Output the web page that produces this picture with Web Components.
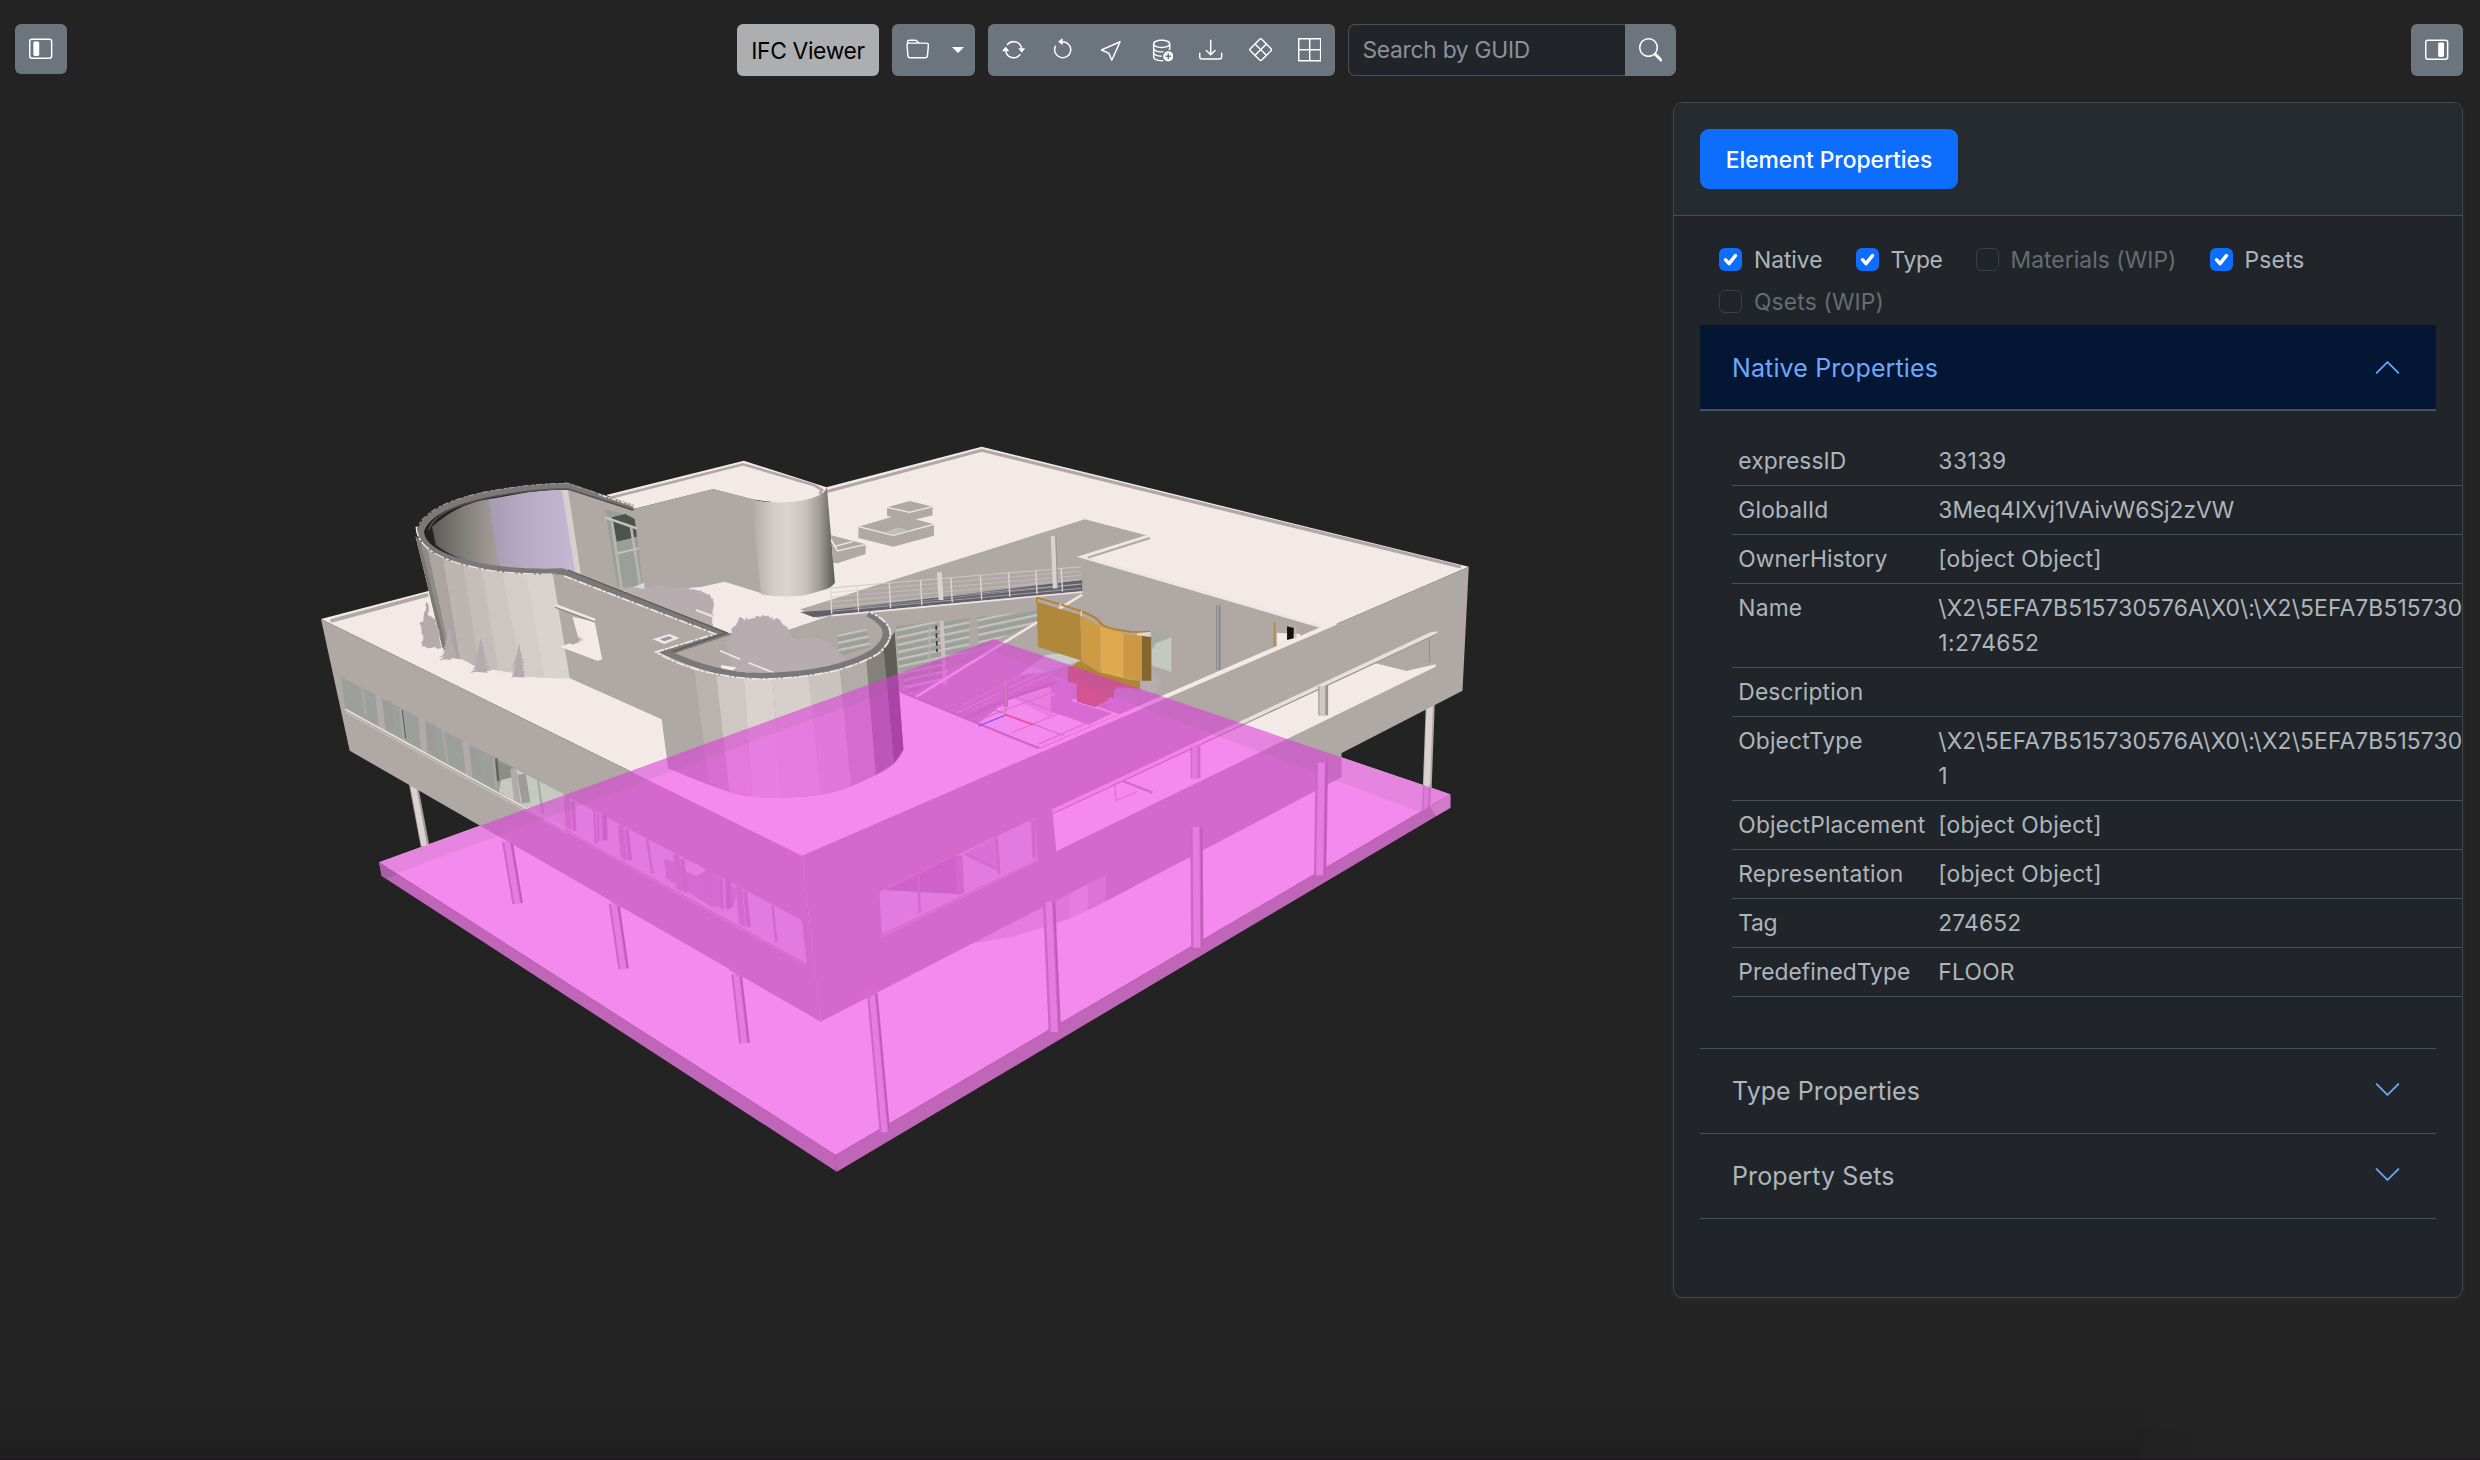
<!DOCTYPE html>
<html lang="en">
<head>
<meta charset="utf-8">
<title>IFC Viewer</title>
<style>
html,body{margin:0;height:100%}
body{background:#232323;overflow:hidden;font-family:Inter,"Liberation Sans",sans-serif;font-size:22.8px;color:#adb5bd}
</style>
</head>
<body>
<viewer-app></viewer-app>
<script>
const define=(name,html,init)=>{
  const t=document.createElement('template');t.innerHTML=html;
  customElements.define(name,class extends HTMLElement{
    constructor(){super();this.attachShadow({mode:'open'}).append(t.content.cloneNode(true));}
    connectedCallback(){if(init)init.call(this,this.shadowRoot);}
  });
};
const ICONS={
 sidebarLeft:'<path d="M14 2a1 1 0 0 1 1 1v10a1 1 0 0 1-1 1H2a1 1 0 0 1-1-1V3a1 1 0 0 1 1-1h12zM2 1a2 2 0 0 0-2 2v10a2 2 0 0 0 2 2h12a2 2 0 0 0 2-2V3a2 2 0 0 0-2-2H2z"/><path d="M3 4a1 1 0 0 1 1-1h2a1 1 0 0 1 1 1v8a1 1 0 0 1-1 1H4a1 1 0 0 1-1-1V4z"/>',
 sidebarRight:'<path d="M14 2a1 1 0 0 1 1 1v10a1 1 0 0 1-1 1H2a1 1 0 0 1-1-1V3a1 1 0 0 1 1-1h12zM2 1a2 2 0 0 0-2 2v10a2 2 0 0 0 2 2h12a2 2 0 0 0 2-2V3a2 2 0 0 0-2-2H2z"/><path d="M9 4a1 1 0 0 1 1-1h2a1 1 0 0 1 1 1v8a1 1 0 0 1-1 1h-2a1 1 0 0 1-1-1V4z"/>',
 folder:'<path d="M.54 3.87.5 3a2 2 0 0 1 2-2h3.672a2 2 0 0 1 1.414.586l.828.828A2 2 0 0 0 9.828 3h3.982a2 2 0 0 1 1.992 2.181l-.637 7A2 2 0 0 1 13.174 14H2.826a2 2 0 0 1-1.991-1.819l-.637-7a1.99 1.99 0 0 1 .342-1.31zM2.19 4a1 1 0 0 0-.996 1.09l.637 7a1 1 0 0 0 .995.91h10.348a1 1 0 0 0 .995-.91l.637-7A1 1 0 0 0 13.81 4H2.19zm4.69-1.707A1 1 0 0 0 6.172 2H2.5a1 1 0 0 0-1 .981l.006.139C1.72 3.042 1.95 3 2.19 3h5.396l-.707-.707z"/>',
 repeat:'<path d="M11.534 7h3.932a.25.25 0 0 1 .192.41l-1.966 2.36a.25.25 0 0 1-.384 0l-1.966-2.36a.25.25 0 0 1 .192-.41zm-11 2h3.932a.25.25 0 0 0 .192-.41L2.692 6.23a.25.25 0 0 0-.384 0L.342 8.59A.25.25 0 0 0 .534 9z"/><path d="M8 3c-1.552 0-2.94.707-3.857 1.818a.5.5 0 1 1-.771-.636A6.002 6.002 0 0 1 13.917 7H12.9A5.002 5.002 0 0 0 8 3zM3.1 9a5.002 5.002 0 0 0 8.757 2.182.5.5 0 1 1 .771.636A6.002 6.002 0 0 1 2.083 9H3.1z"/>',
 ccw:'<path d="M8 3a5 5 0 1 1-4.546 2.914.5.5 0 0 0-.908-.417A6 6 0 1 0 8 2v1z"/><path d="M8 4.466V.534a.25.25 0 0 0-.41-.192L5.23 2.308a.25.25 0 0 0 0 .384l2.36 1.966A.25.25 0 0 0 8 4.466z"/>',
 cursor:'<path d="M14.082 2.182a.5.5 0 0 1 .103.557L8.528 15.467a.5.5 0 0 1-.917-.007L5.57 10.694.803 8.652a.5.5 0 0 1-.006-.916l12.728-5.657a.5.5 0 0 1 .556.103zM2.25 8.184l3.897 1.67a.5.5 0 0 1 .262.263l1.67 3.897L12.743 3.52z"/>',
 dbadd:'<path d="M12.5 16a3.5 3.5 0 1 0 0-7 3.5 3.5 0 0 0 0 7Zm.5-5v1h1a.5.5 0 0 1 0 1h-1v1a.5.5 0 0 1-1 0v-1h-1a.5.5 0 0 1 0-1h1v-1a.5.5 0 0 1 1 0Z"/><path d="M12.096 6.223A4.92 4.92 0 0 0 13 5.698V7c0 .289-.213.654-.753 1.007a4.493 4.493 0 0 1 1.753.25V4c0-1.007-.875-1.755-1.904-2.223C11.022 1.289 9.573 1 8 1s-3.022.289-4.096.777C2.875 2.245 2 2.993 2 4v9c0 1.007.875 1.755 1.904 2.223C4.978 15.71 6.427 16 8 16c.536 0 1.058-.034 1.555-.097a4.525 4.525 0 0 1-.813-.927C8.5 14.992 8.252 15 8 15c-1.464 0-2.766-.27-3.682-.687C3.356 13.875 3 13.373 3 13v-1.302c.271.202.58.378.904.525C4.978 12.71 6.427 13 8 13h.027a4.552 4.552 0 0 1 0-1H8c-1.464 0-2.766-.27-3.682-.687C3.356 10.875 3 10.373 3 10V8.698c.271.202.58.378.904.525C4.978 9.71 6.427 10 8 10c.262 0 .52-.008.774-.024a4.525 4.525 0 0 1 1.102-1.132C9.298 8.944 8.666 9 8 9c-1.464 0-2.766-.27-3.682-.687C3.356 7.875 3 7.373 3 7V5.698c.271.202.58.378.904.525C4.978 6.711 6.427 7 8 7s3.022-.289 4.096-.777ZM3 4c0-.374.356-.875 1.318-1.313C5.234 2.271 6.536 2 8 2s2.766.27 3.682.687C12.644 3.125 13 3.627 13 4c0 .374-.356.875-1.318 1.313C10.766 5.729 9.464 6 8 6s-2.766-.27-3.682-.687C3.356 4.875 3 4.373 3 4Z"/>',
 download:'<path d="M.5 9.9a.5.5 0 0 1 .5.5v2.5a1 1 0 0 0 1 1h12a1 1 0 0 0 1-1v-2.5a.5.5 0 0 1 1 0v2.5a2 2 0 0 1-2 2H2a2 2 0 0 1-2-2v-2.5a.5.5 0 0 1 .5-.5z"/><path d="M7.646 11.854a.5.5 0 0 0 .708 0l3-3a.5.5 0 0 0-.708-.708L8.5 10.293V1.5a.5.5 0 0 0-1 0v8.793L5.354 8.146a.5.5 0 1 0-.708.708l3 3z"/>',
 diamond:'<path fill="none" stroke="currentColor" stroke-linejoin="round" d="M7.3.9a1 1 0 0 1 1.4 0l6.4 6.4a1 1 0 0 1 0 1.4l-6.4 6.4a1 1 0 0 1-1.4 0L.9 8.7a1 1 0 0 1 0-1.4zM4.3 4.3l7.4 7.4M11.7 4.3l-7.4 7.4"/>',
 grid:'<path d="M0 0h16v16H0V0zm1 1v6.5h6.5V1H1zm7.5 0v6.5H15V1H8.5zM15 8.5H8.5V15H15V8.5zM7.5 15V8.5H1V15h6.5z"/>',
 search:'<path d="M11.742 10.344a6.5 6.5 0 1 0-1.397 1.398h-.001c.03.04.062.078.098.115l3.85 3.85a1 1 0 0 0 1.415-1.414l-3.85-3.85a1.007 1.007 0 0 0-.115-.1zM12 6.5a5.5 5.5 0 1 1-11 0 5.5 5.5 0 0 1 11 0z"/>',
 chevron:'<path fill-rule="evenodd" d="M1.646 4.646a.5.5 0 0 1 .708 0L8 10.293l5.646-5.647a.5.5 0 0 1 .708.708l-6 6a.5.5 0 0 1-.708 0l-6-6a.5.5 0 0 1 0-.708z"/>',
 check:'<path fill="none" stroke="currentColor" stroke-width="2.4" stroke-linecap="round" stroke-linejoin="round" d="M4.6 8.2l2.4 2.7 4.4-5.6"/>'
};
/* Text run tracked to a fixed advance width */
define('ui-text','<style>:host{display:inline-block;white-space:pre}</style><slot></slot>',function(){
  const s=this.style,a=n=>this.getAttribute(n);
  if(a('size'))s.fontSize=a('size')+'px';
  if(a('weight'))s.fontWeight=a('weight');
  if(a('w')){s.letterSpacing='0px';const n=this.textContent.length;
    s.letterSpacing=((+a('w')-this.getBoundingClientRect().width)/n).toFixed(3)+'px';}
});
define('ui-icon','<style>:host{display:block;width:23.4px;height:23.4px;flex:none}svg{display:block;width:100%;height:100%}</style><svg viewBox="0 0 16 16" fill="currentColor"></svg>',function(r){
  r.querySelector('svg').innerHTML=ICONS[this.getAttribute('name')];
});
define('ui-button','<style>:host{display:flex;align-items:center;justify-content:center;box-sizing:border-box;height:52px;border-radius:6px;background:#6c757d;color:#fff}</style><slot></slot>');
define('search-box',`<style>:host{display:flex;width:328px;height:52px}
.f{flex:1;box-sizing:border-box;border:1px solid #495057;border-right:0;border-radius:7px 0 0 7px;background:#212529;color:#8b9199;display:flex;align-items:center;padding-left:13.5px}
ui-text{margin-top:-2px}
ui-button{width:51px;border-radius:0 7px 7px 0}</style>
<div class="f"><ui-text w="167.5">Search by GUID</ui-text></div><ui-button><ui-icon name="search"></ui-icon></ui-button>`);
define('tool-bar',`<style>:host{display:flex;align-items:flex-start;padding:24px 17px 0 15px;height:78px;position:relative}
.side{width:52px}.mid{display:flex;gap:13px;margin-left:670px}
.title{width:142px;background:#adaeb0;color:#000}
.open{width:83px;justify-content:flex-start;padding-left:14px;gap:23px}
.caret{border:6px solid transparent;border-top:6.5px solid #fff;border-bottom:0}
.tools{width:347px;gap:26px}</style>
<ui-button class="side" style="height:50px"><ui-icon name="sidebarLeft"></ui-icon></ui-button>
<div class="mid">
<ui-button class="title"><ui-text w="113.5">IFC Viewer</ui-text></ui-button>
<ui-button class="open"><ui-icon name="folder"></ui-icon><span class="caret"></span></ui-button>
<ui-button class="tools"><ui-icon name="repeat"></ui-icon><ui-icon name="ccw"></ui-icon><ui-icon name="cursor"></ui-icon><ui-icon name="dbadd"></ui-icon><ui-icon name="download"></ui-icon><ui-icon name="diamond"></ui-icon><ui-icon name="grid"></ui-icon></ui-button>
<search-box></search-box></div>
<ui-button class="side" style="margin-left:auto"><ui-icon name="sidebarRight"></ui-icon></ui-button>`);
define('check-item',`<style>:host{display:flex;align-items:center;gap:12px;height:42px}
.b{width:23px;height:23px;box-sizing:border-box;border-radius:6px;background:#0d6efd;color:#fff}
:host([off]) .b{background:none;border:1px solid #3a4045}:host([off]) ui-icon{display:none}
:host([off]){color:#676c71}ui-icon{width:23px;height:23px}</style><div class="b"><ui-icon name="check"></ui-icon></div><slot></slot>`);
define('prop-row',`<style>:host{display:grid;grid-template-columns:200px 1fr;padding:6px 0 6.85px 6.3px;border-bottom:1px solid #495057;line-height:35.1px;min-height:35.1px}
div{display:flex;flex-direction:column;align-items:flex-start}</style><div><slot name="k"></slot></div><div><slot></slot></div>`);
define('acc-item',`<style>:host{display:block;border-bottom:1px solid #495057}
.h{height:84px;display:flex;align-items:center;justify-content:space-between;padding:0 34.5px 0 32px}
ui-icon{width:29px;height:29px;color:#6ea8fe;margin-top:-2px}
:host([open]) .h{height:83.5px;background:#031633;color:#6ea8fe;border-bottom:2px solid #495057}
:host([open]) .h ::slotted(*),:host([open]) ui-icon{position:relative;top:1px}
:host([open]) ui-icon{transform:rotate(180deg)}
.c{display:none}:host([open]) .c{display:block;height:583.5px;padding:26.2px 0 27px 32px;margin-right:-26.5px}</style>
<div class="h"><slot name="t"></slot><ui-icon name="chevron"></ui-icon></div><div class="c"><slot></slot></div>`);
define('property-panel',`<style>:host{display:block;box-sizing:border-box;width:790px;height:1196px;margin-left:1673px;position:relative;border:1px solid #42474c;border-radius:9px;background:#212529;overflow:hidden;box-shadow:0 3px 9px rgba(255,255,255,.035)}
.top{height:112px;background:#262b2f;border-bottom:1px solid #464b50;display:flex;align-items:center;padding-left:26px}
.top ui-button{width:258px;height:60px;border-radius:9px;background:#0d6efd}
.checks{display:flex;flex-wrap:wrap;column-gap:33px;padding:22.4px 60px 0 45px;height:87px;align-content:flex-start}
.acc{margin:0 25px 0 26px;width:736px}</style>
<div class="top"><ui-button><ui-text w="206.5" weight="500">Element Properties</ui-text></ui-button></div>
<div class="checks"><check-item><ui-text w="68.5">Native</ui-text></check-item><check-item><ui-text w="52">Type</ui-text></check-item><check-item off><ui-text w="166">Materials (WIP)</ui-text></check-item><check-item><ui-text w="60">Psets</ui-text></check-item><check-item off><ui-text w="130">Qsets (WIP)</ui-text></check-item></div>
<div class="acc">
<acc-item open><ui-text slot="t" size="25" w="206">Native Properties</ui-text>
<prop-row><ui-text slot="k" w="108">expressID</ui-text><ui-text w="68.5">33139</ui-text></prop-row>
<prop-row><ui-text slot="k" w="90">GlobalId</ui-text><ui-text w="296">3Meq4IXvj1VAivW6Sj2zVW</ui-text></prop-row>
<prop-row><ui-text slot="k" w="149">OwnerHistory</ui-text><ui-text w="163.5">[object Object]</ui-text></prop-row>
<prop-row><ui-text slot="k" w="64">Name</ui-text><ui-text w="524">\\X2\\5EFA7B515730576A\\X0\\:\\X2\\5EFA7B515730</ui-text><ui-text w="101">1:274652</ui-text></prop-row>
<prop-row><ui-text slot="k" w="125">Description</ui-text></prop-row>
<prop-row><ui-text slot="k" w="124.5">ObjectType</ui-text><ui-text w="524">\\X2\\5EFA7B515730576A\\X0\\:\\X2\\5EFA7B515730</ui-text><ui-text>1</ui-text></prop-row>
<prop-row><ui-text slot="k" w="187">ObjectPlacement</ui-text><ui-text w="163.5">[object Object]</ui-text></prop-row>
<prop-row><ui-text slot="k" w="165">Representation</ui-text><ui-text w="163.5">[object Object]</ui-text></prop-row>
<prop-row><ui-text slot="k" w="39">Tag</ui-text><ui-text w="83">274652</ui-text></prop-row>
<prop-row><ui-text slot="k" w="172">PredefinedType</ui-text><ui-text w="76.5">FLOOR</ui-text></prop-row>
</acc-item>
<acc-item><ui-text slot="t" size="25" w="188">Type Properties</ui-text></acc-item>
<acc-item><ui-text slot="t" size="25" w="162.5">Property Sets</ui-text></acc-item>
</div>`);
const A='transform="translate(300 430) scale(.38265 .33333)"',B='transform="translate(800 430) scale(.446429 .33333)"',C='transform="translate(360 740) scale(.38265 .33333)"',D='transform="translate(800 740) scale(.446429 .33333)"';
const p=(pts,f)=>`<polygon points="${pts}" fill="${f}"/>`;
const l=(pts,c,w)=>`<polyline points="${pts}" fill="none" stroke="${c}" stroke-width="${w}"/>`;
const G='#b0a8a5',W='#f3eae7';
const noise=i=>{const v=Math.sin(i*127.1+3.7)*43758.5453;return v-Math.floor(v);};
/* jagged foliage outline around an ellipse */
const bush=(cx,cy,rx,ry,f)=>{let s='';const n=84;for(let i=0;i<n;i++){const a=i/n*6.2832,d=(i%2?4+11*noise(i+cx):-5*noise(i));s+=(cx+(rx+d)*Math.cos(a)).toFixed(1)+','+(cy+(ry+d)*Math.sin(a)).toFixed(1)+' ';}return p(s,f);};
/* polygon whose edges are broken into leafy steps */
const leafy=(pts,f)=>{let s='';for(let i=0;i<pts.length;i++){const a=pts[i],b=pts[(i+1)%pts.length],n=Math.max(1,Math.round(Math.hypot(b[0]-a[0],b[1]-a[1])/6));for(let k=0;k<n;k++){const t=k/n;s+=(a[0]+(b[0]-a[0])*t+8*noise(i*31+k)-4).toFixed(1)+','+(a[1]+(b[1]-a[1])*t+10*noise(i*17+k+5)-5).toFixed(1)+' ';}}return p(s,f);};
/* ragged conifer: apex x,y, base line b, half width w */
const cone=(x,y,b,w)=>{let s='';const n=11;const e=(i,d)=>{const t=i/n,h=y+(b-y)*t;return `${(x+d*w*t*(.8+.5*noise(i+x+d))).toFixed(1)} ${(h+4).toFixed(1)} ${(x+d*w*t*.55).toFixed(1)} ${h.toFixed(1)} `;};for(let i=0;i<=n;i++)s+=e(i,-1);for(let i=n;i>=0;i--)s+=e(i,1);return p(s,'#b5abae');};
const box=(L,T,R,Bo,h)=>p(`${L} ${T[1]} ${L} ${T[1]+h} ${Bo[0]} ${Bo[1]+h} ${R} ${T[2]+h} ${R} ${T[2]} ${Bo[0]} ${Bo[1]}`,G)+p(`${L} ${T[1]} ${T[0]} ${T[3]} ${R} ${T[2]} ${Bo[0]} ${Bo[1]}`,G)+l(`${L} ${T[1]} ${Bo[0]} ${Bo[1]} ${R} ${T[2]}`,'#efe6e3',4);
let rails='';for(let i=0;i<6;i++)rails+=l(`68 ${474+i*14} 630 ${410+i*13}`,'#cfc8c8',i?1.5:3);
[68,128,200,270,338,404,467,528,585].forEach(x=>{rails+=l(`${x} ${474-(x-68)*.114} ${x+3} ${552-(x-68)*.13}`,'#ddd6d5',3)});
let thick=[[160,752,172,858,0],[205,797,215,898,1],[262,835,272,930,0],[318,864,325,967,1],[373,900,386,998,0],[432,935,442,1040,1],[505,985,513,1075,0],[557,1015,569,1122,1],[622,1052,635,1153,0]].map(m=>(m[4]?l(`${m[0]+22} ${m[1]+18} ${m[2]+22} ${m[3]-4}`,'#9c9c9b',22):'')+l(`${m[0]} ${m[1]} ${m[2]} ${m[3]}`,m[4]?'#b3abab':'#aca6a6',m[4]?16:6)).join('');
let thickC=[[540,170,545,275,1],[612,205,616,310,0],[682,255,690,364,1],[750,295,764,402,0],[826,343,836,460,1],[910,390,921,500,0],[990,440,1000,562,1],[1078,495,1088,607,0]].map(m=>(m[4]?l(`${m[0]+16} ${m[1]+14} ${m[2]+16} ${m[3]-2}`,'#aaa2a6',10):'')+l(`${m[0]} ${m[1]} ${m[2]} ${m[3]}`,'#b0a8a6',m[4]?16:7)).join('');
const post=(x1,y1,x2,y2)=>l(`${x1} ${y1} ${x2} ${y2}`,'#cf66c8',28)+l(`${x1-1} ${y1} ${x2-1} ${y2}`,'#e67ce0',15)+l(`${x1+11} ${y1} ${x2+11} ${y2}`,'#b95ab5',3);
const quad=(a,b,c)=>p(`${a[0]} ${a[1]} ${b[0]} ${b[1]} ${b[2]} ${b[3]} ${a[2]} ${a[3]}`,c);
const strip=(arr,cols)=>cols.map((c,i)=>quad(arr[i],arr[i+1],c)).join('');
const model=`
<defs>
<linearGradient id="cy"><stop offset="0" stop-color="#b0a8a5"/><stop offset=".25" stop-color="#d2cac7"/><stop offset=".42" stop-color="#dcd4d1"/><stop offset=".65" stop-color="#c9c1be"/><stop offset=".82" stop-color="#a09a96"/><stop offset=".93" stop-color="#74726d"/><stop offset="1" stop-color="#5b5a54"/></linearGradient>
<linearGradient id="in"><stop offset="0" stop-color="#5b5b54"/><stop offset=".4" stop-color="#7c7974"/><stop offset="1" stop-color="#a89f9c"/></linearGradient>
<linearGradient id="lv"><stop offset="0" stop-color="#a49bb2"/><stop offset=".4" stop-color="#b6aac5"/><stop offset="1" stop-color="#c5b8d4"/></linearGradient>
<pattern id="lou" width="40" height="22" patternUnits="userSpaceOnUse" patternTransform="skewY(-16)"><rect width="40" height="22" fill="#9da09a"/><rect width="40" height="7" fill="#c6c2bf"/></pattern>
<clipPath id="slab"><path d="M379 862.3 993.8 639 1450.4 794.3V807.7L836.8 1171.7 381.8 876z"/></clipPath>
</defs>
<g ${C}>${l('139 130 170 318','#a39b98',23)}${l('138 130 168 318','#dcd3d1',15)}</g>
<g ${B}>${l('1412 815 1403 1145','#b0a8a5',20)}${l('1411 815 1402 1145','#dcd3d1',14)}</g>
${p('379 862.3 993.8 639 1450.4 794.3 835.6 1155',W)}
<g ${B}>${l('1405 1065 1402 1145','#b0a8a5',18)}${l('1404 1065 1401 1145','#dcd3d1',10)}</g>
<g ${D}>${p('380 612 570 470 685 400 685 484 645 511 605 535 550 560 480 590','#d5cdca')}${p('550 500 605 440 605 535 550 560','#c9c1be')}${p('645 420 685 400 685 484 645 511','#c3bbb8')}${p('685 395 1213 37 1213 112 685 484',G)}</g>
${p('321 619 981.7 446.7 1468.8 566.7 802 855.7',W)}
${p('321 619 802 855.7 820.7 1021.7 349.7 750.7',G)}
${p('802 855.7 1468.8 566.7 1462.5 690.7 820.7 1021.7',G)}
${l('827 491.5 981.7 450.3 1461 567','#b0a8a5',3.2)}
<g ${A}>${l('80 573 335 494','#b0a8a5',11)}
${p('108 740 690 1092 700 1202 118 838','#9ca09a')}${p('560 1015 690 1092 700 1202 575 1120','#c5c9c2')}
${p('500 985 560 1015 565 1065 515 1055','#8b8f87')}${p('525 1050 560 1040 568 1118 520 1085','#c5c9c2')}
${l('266 840 275 925','#5d625b',5)}${l('513 985 518 1052','#5d625b',6)}
${thick}${l('118 838 700 1203','#e4dddb',5)}${l('120 848 700 1212','#cac2c0',3)}</g>
<g ${C}>${p('525 160 1155 540 1167 668 536 268','#cdcac9')}${p('795 355 890 400 905 385 985 450 975 500 920 500 850 450 800 415','#b3abaa')}${p('850 375 880 372 905 390 880 408 852 395','#d6cecb')}${thickC}${l('632 220 634 302','#a59da0',26)}${l('628 220 630 302','#c4bcbb',9)}${l('955 415 957 507','#a59da0',26)}${l('951 415 953 507','#c4bcbb',9)}${l('440 200 1167 668','#d6cecb',5)}${l('440 210 1167 677','#cac2bf',3)}</g>
<g ${A}>
${p('800 195 1160 92 1376 172 1372 190 1330 210 1240 217 1180 208 1080 178 875 236',W)}
${l('806 205 1158 103 1345 166 1364 180 1358 192','#b0a8a5',8)}
${p('690 172 705 176 875 236 1080 177 1185 208 1215 493 1110 455 1050 470 880 490 850 490 730 437',G)}
<path d="M1180 208Q1240 224 1310 212Q1370 200 1377 172L1398 458Q1380 488 1310 497Q1250 503 1205 493z" fill="url(#cy)"/>
${p('797 238 870 258 880 300 895 460 890 470 830 470','#9aa099')}${p('815 262 850 252 875 268 880 320 828 335','#4c544e')}
${l('797 262 880 295','#c9c4c2',7)}${l('815 275 840 475','#b9b5b3',7)}${l('865 290 890 470','#b9b5b3',7)}${l('830 370 885 355','#c9c4c2',5)}
${p('840 485 900 458 900 480','#d6dad3')}
<path d="M345 290Q420 215 500 206L520 412Q410 395 355 345z" fill="url(#in)"/>
${p('493 208 600 186 686 176 722 436 660 425 520 412','url(#lv)')}
${p('684 176 700 178 735 440 720 434','#d9d0cd')}
${leafy([[333,520],[345,600],[370,655],[340,652],[318,650],[322,620],[315,590],[322,555]],'#b5abae')}
<path d="M302 320Q340 375 400 395Q520 425 660 427L705 745Q560 745 470 715Q420 700 375 660z" fill="#d4cbc9"/>
${strip([[302,318,372,650],[335,362,395,680],[375,388,420,695],[428,406,470,712],[475,415,520,728],[528,422,580,738],[590,426,640,744],[660,428,705,745]],['#8f8b86','#aba4a0','#bdb5b2','#c5bdba','#cdc5c2','#d4ccc9','#dad2cf'])}
${p('302 318 314 335 385 668 372 652','#7c7974')}
${leafy([[335,560],[352,570],[362,600],[370,650],[330,650],[325,600]],'#b5abae')}${cone(390,590,688,24)}
${cone(473,620,725,24)}${cone(572,635,740,22)}
${l('318 656 340 664 368 670','#f3eae7',9)}${l('395 688 425 693 455 712','#f3eae7',8)}${l('500 722 555 732','#f3eae7',7)}${l('585 746 635 750','#f3eae7',9)}
${leafy([[850,487],[870,472],[905,474],[930,465],[970,472],[1010,472],[1048,480],[1072,500],[1083,525],[1078,555],[1078,590],[1062,598],[960,560]],'#b7adb0')}${l('1035 540 1080 560','#e9e0dd',7)}
${p('970 668 1117 612 1275 600 1390 555 1490 548 1540 600 1530 650 1440 710 1240 738 1060 710','#b0a8a5')}
</g>
<g ${B}>
${p('0 538 638 268 782 318 632 380 1168 590 540 955 225 785 160 740 160 590 150 555 71 555 40 564','#b0a8a5')}
${p('0 538 130 484 68 474 0 500',W)}
${l('782 318 632 380 1168 590','#efe6e3',9)}${l('784 324 645 383','#b0a8a5',6)}
${p('215 588 380 565 380 668 222 722','url(#lou)')}${p('397 562 545 540 530 580 400 652','url(#lou)')}${p('85 610 150 596 158 650 85 680','url(#lou)')}
${p('227 722 330 680 330 740 240 795','url(#lou)')}${l('388 560 388 668','#b0a8a5',16)}${l('317 572 325 765','#c9c2c0',9)}${l('290 590 290 740','#b7b2af',4)}<line x1="305" y1="587" x2="307" y2="665" stroke="#3a3a38" stroke-width="4" stroke-dasharray="14 9"/>
${p('0 546 70 540 632 450 632 483 70 555 30 562','#62606b')}${l('70 557 632 486','#efe6e3',5)}${l('120 535 632 462','#8f8b92',3)}${rails}
${l('312 427 316 510','#dad2cf',11)}${l('567 318 572 475','#dad2cf',11)}${l('573 318 577 475','#a09896',3)}
${box(195,[246,232,230,213],297,[245,247],26)}${box(131,[222,290,283,254],300,[209,316],34)}${p('190 306 222 292 245 302 209 313','#b8c1ba')}
${p('70 316 147 343 147 372 84 400 74 398',G)}${l('70 330 84 363 147 343','#efe6e3',4)}${l('75 350 118 335','#efe6e3',4)}
${l('632 494 258 802','#efe6e3',7)}${l('600 690 350 850','#c6bebc',4)}${l('615 700 385 840','#c6bebc',3)}${l('575 680 360 830','#c6bebc',3)}
${p('550 675 600 668 630 690 560 725 490 735','#c8cdc8')}
${p('395 885 470 805 580 790 715 852 540 952',W)}
${p('470 800 560 770 580 830 560 860','#d8d0ce')}${l('375 862 470 805 590 750','#9f9794',7)}
${l('400 822 590 916','#a9a1a0',3)}${l('475 908 690 790','#b5adac',3)}${l('480 800 650 885','#b5adac',3)}${l('400 870 600 770','#b5adac',3)}${l('535 942 640 880','#b5adac',3)}
${p('562 795 700 850 650 882 562 845','#b7adb0')}${bush(590,780,18,65,'#b7adb0')}${bush(780,760,22,35,'#b7adb0')}${bush(720,810,38,30,'#b7adb0')}
${l('449 765 449 830','#b0a8a5',5)}${l('460 765 460 830','#a9a1a0',12)}
${p('787 603 832 622 832 726 787 706','#c3c8c1')}${p('787 603 832 622 797 640 790 660','#a6aaa3')}
${p('600 715 628 692 672 727 740 750 762 752 762 778 748 775 700 770 660 735','#b0872f')}
${p('600 712 640 722 690 748 735 765 722 772 716 768 703 780 703 808 694 800 688 812 676 818 662 832 620 815 620 760 600 755','#b07c30')}
${strip([[530,515,533,650],[628,555,631,692],[672,588,674,727],[725,612,725,744],[766,618,766,752],[787,621,787,752]],['#b0873b','#cf9a44','#dfa94d','#cc9843','#866530'])}
<path d="M530 503Q590 525 628 543T672 578T740 605L785 606" fill="none" stroke="#b9832b" stroke-width="6"/>${l('530 503 530 520','#b9832b',3)}${l('583 520 583 535','#ddd',3)}${l('630 543 630 558','#ddd',3)}${p('755 610 785 605 785 620 755 616','#ddd6d0')}
${l('937 527 937 720','#87838a',10)}${l('936 527 936 720','#a49da2',5)}
${l('1063 577 1063 650','#b0894d',4)}${p('1068 608 1120 612 1122 622 1068 648',W)}${p('1091 589 1106 594 1106 625 1091 630','#141210')}${l('1110 594 1110 625','#d7b98f',4)}
${l('1200 580 540 961','#f3eae7',10)}
${l('225 785 535 955','#a49c9a',6)}
${p('566 1147 1290 700 1360 722 1424 703 1424 710 574 1264',W)}${p('1290 700 1410 627 1410 698 1358 722',G)}${l('1410 625 1410 698','#8f8886',2)}
${p('565 1138 1412 607 1430 604 1424 612 566 1150','#e8dfdd')}${l('568 1150 1425 613','#9f9795',3)}
${l('1172 768 1172 856','#9b9592',22)}${l('1170 768 1170 858','#d0c8c5',13)}${l('886 950 886 1045','#b0a8a5',22)}${l('884 950 884 1045','#cfc7c4',12)}
${l('725 1054 790 1088','#b0a8a5',7)}${l('705 1065 708 1112 755 1085','#c0b8b5',3)}
</g>
<g ${D}>${p('178 455 525 235 532 355 183 583','#cdcac9')}${p('190 450 352 345 357 462','#a49a9e')}${p('368 340 440 292 443 383','#bdb6b7')}${l('370 342 442 388','#b0a8a5',7)}
${l('265 400 268 520','#b0a8a5',6)}${l('356 346 360 464','#b0a8a5',16)}${l('440 292 446 402','#b0a8a5',7)}${l('521 240 525 355','#b0a8a5',8)}${l('183 580 532 355','#d6cecb',4)}${l('183 590 534 360','#c6bebb',4)}</g>
<g ${A}>
${p('660 428 690 432 1090 608 930 666 1030 715 1068 1055 962 1014 945 868 705 745',G)}
${leafy([[1112,645],[1124,622],[1130,592],[1142,577],[1145,560],[1162,568],[1185,562],[1212,556],[1228,564],[1250,567],[1262,582],[1275,602],[1287,628],[1330,624],[1380,634],[1395,657],[1412,672],[1422,686]],'#b7adb0')}${p('1115 640 1422 684 1400 712 1240 730 1130 722','#b7adb0')}
${l('1098 662 1150 688','#efe6e3',5)}${l('1172 698 1238 728','#efe6e3',5)}${p('1100 705 1140 712 1130 724 1100 715',W)}
<path d="M1030 715Q1140 750 1240 745Q1400 735 1480 690Q1545 650 1554 600L1577 960Q1560 1010 1505 1035Q1430 1080 1360 1095Q1200 1115 1120 1085Q1040 1055 962 1014z" fill="#b0a8a5"/>
${strip([[1030,715,1068,1055],[1088,738,1122,1085],[1160,746,1182,1101],[1235,746,1260,1105],[1330,738,1362,1095],[1411,718,1440,1068],[1480,690,1505,1035],[1525,655,1552,1000],[1554,605,1577,960]],['#bab2af','#cfc7c4','#dad2cf','#d6cecb','#cbc3c0','#b2aca9','#84817c','#5e5d57'])}
${p('712 560 770 575 790 690 700 652 730 635','#f3eae7')}${bush(728,628,5,5,'#aaa2a0')}${l('668 528 772 572','#8e8684',12)}${l('668 526 772 570','#efe6e3',8)}${p('680 650 705 640 788 688 778 693',W)}
${p('922 628 965 612 992 624 952 642','#efe9ec')}${p('940 627 965 619 975 625 952 634','#9d9596')}
<path d="M870 234L790 203L700 167Q600 168 480 195Q330 235 315 305Q320 385 520 417Q600 428 685 424L1105 612L958 668Q1080 735 1200 738Q1400 735 1500 665Q1570 600 1485 551" fill="none" stroke="#7b7877" stroke-width="18"/>
<path d="M872 240L790 210L700 177Q600 177 485 205Q350 240 337 300" fill="none" stroke="#55524f" stroke-width="4"/>
<path d="M872 226L790 195L700 160Q600 160 480 187Q325 225 304 300" fill="none" stroke="#a39c99" stroke-width="3" stroke-dasharray="16 5 7 8"/><path d="M872 228L780 193" fill="none" stroke="#efe6e3" stroke-width="4" stroke-dasharray="12 4 5 4"/>
<path d="M304 290Q305 390 520 425Q600 434 665 432" fill="none" stroke="#efe6e3" stroke-width="4" stroke-dasharray="30 4 9 5"/>
<path d="M690 438L1085 612L930 666Q1040 740 1200 747Q1400 745 1510 672Q1585 600 1490 546" fill="none" stroke="#efe6e3" stroke-width="5" stroke-dasharray="25 3 9 4"/>
<path d="M700 420L1115 608L975 664" fill="none" stroke="#5c5957" stroke-width="4"/>
</g>
<g clip-path="url(#slab)"><path d="M379 862.3 993.8 639 1450.4 794.3V807.7L836.8 1171.7 381.8 876z" fill="rgb(247,42,245)" fill-opacity=".5"/>
<path fill-rule="evenodd" d="M379 862.3 993.8 639 1450.4 794.3 1420 812 993.8 652 397.5 873z" fill="rgb(140,110,140)" fill-opacity=".15"/></g>
${p('379 862.3 835.6 1155 836.8 1171.7 381.8 876','#c066b8')}${p('835.6 1155 1450.4 794.3 1450.4 807.7 836.8 1171.7','#c066b8')}
${p('1430 806.5 1450.4 794.3 1450.4 807.7 1436 816','#cf7dc9')}${p('379 862.3 397.5 874 386 878.5 381.8 876','#a95fa3')}
<g ${C}>${post(385,305,412,490)}${post(664,490,689,686)}${post(984,702,1005,909)}${post(1339,762,1372,1177)}${p('368 290 400 290 400 312','#d56acf')}${p('645 473 682 473 682 506','#d56acf')}${p('965 670 1000 700 1000 715 965 690','#d56acf')}${p('1322 740 1355 740 1355 757 1322 777','#d56acf')}</g>
<g ${D}>${post(558,485,571,876)}${post(888,260,890,623)}${post(1169,68,1165,406)}</g>
<g ${B}>${l('460 750 461 855','#b09a80',3)}${l('461 855 400 888','#6a56ff',3)}${l('461 855 522 885','#ff3f74',3)}</g>`;
define('model-canvas',`<style>:host{display:block;position:absolute;inset:0}svg{display:block;width:2480px;height:1460px}</style><svg viewBox="0 0 2480 1460">${model}</svg>`);
define('viewer-app',`<style>:host{display:block;position:relative;box-sizing:border-box;width:2480px;height:1460px;overflow:hidden;border-bottom:1px solid #1b171b;background:linear-gradient(#232323,#1f1f1f) 0 1400px/2140px 60px no-repeat,linear-gradient(90deg,#212121,#232323) 2140px 1430px/60px 30px no-repeat,#232323}</style><model-canvas></model-canvas><tool-bar></tool-bar><property-panel></property-panel>`);
</script>
</body>
</html>
